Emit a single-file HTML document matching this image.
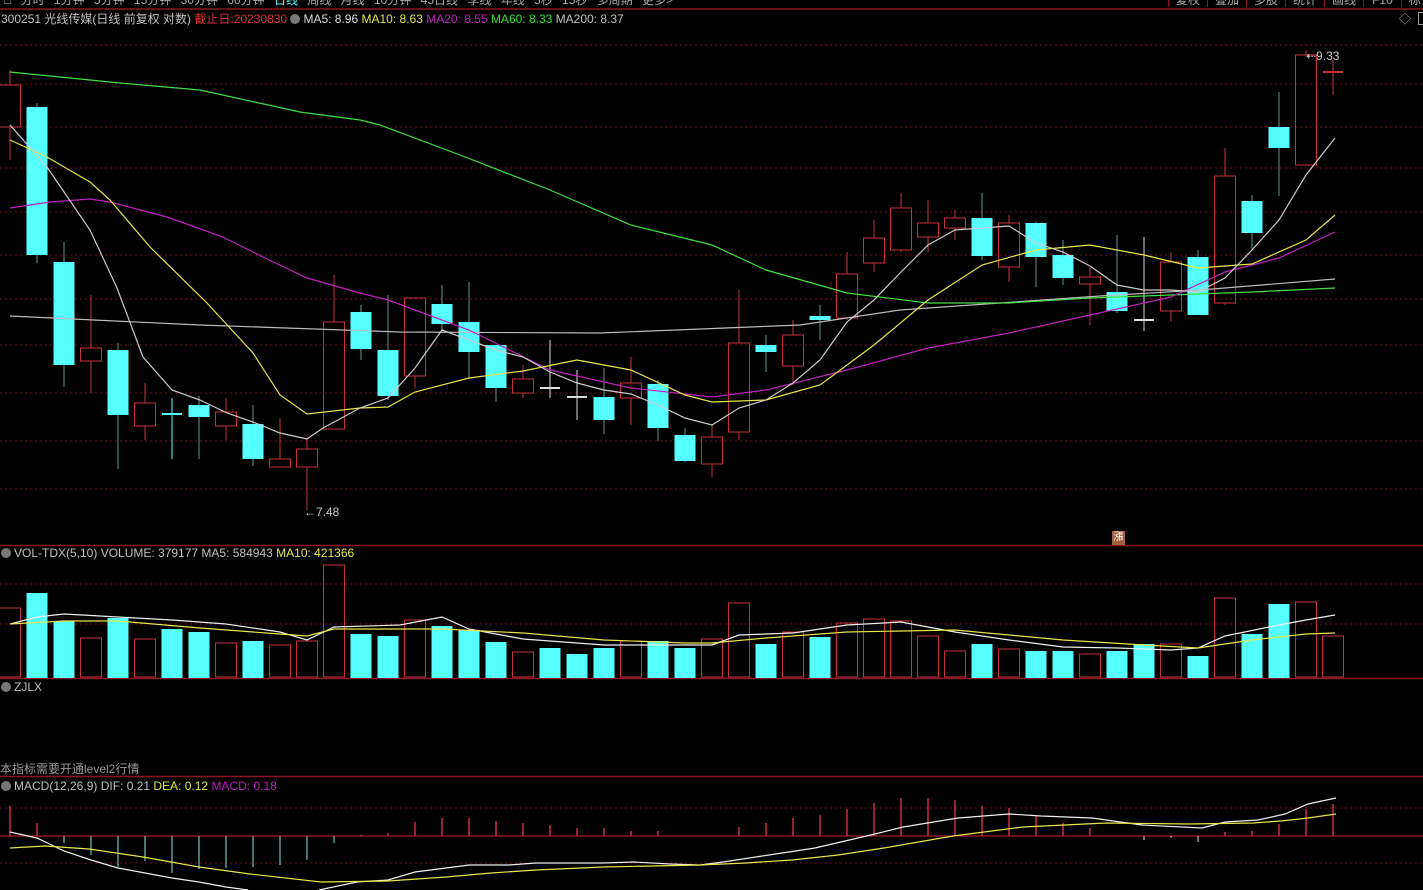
<!DOCTYPE html>
<html><head><meta charset="utf-8">
<style>
html,body{margin:0;padding:0;background:#000;width:1423px;height:890px;overflow:hidden}
body{font-family:"Liberation Sans","Noto Sans CJK SC",sans-serif;font-size:12px;color:#c0c0c0}
svg{position:absolute;left:0;top:0}
.t{position:absolute;white-space:nowrap;line-height:14px}
.ic{display:inline-block;width:10px;height:10px;border-radius:50%;background:#777;vertical-align:-1px;margin-right:3px}
</style></head><body>
<svg id="s" width="1423" height="890" xmlns="http://www.w3.org/2000/svg">
<g stroke="#6a0f18" stroke-dasharray="2,3" stroke-width="1">
<line x1="0" y1="45" x2="1423" y2="45"/><line x1="0" y1="84" x2="1423" y2="84"/><line x1="0" y1="127" x2="1423" y2="127"/><line x1="0" y1="168" x2="1423" y2="168"/><line x1="0" y1="212" x2="1423" y2="212"/><line x1="0" y1="255" x2="1423" y2="255"/><line x1="0" y1="299" x2="1423" y2="299"/><line x1="0" y1="345" x2="1423" y2="345"/><line x1="0" y1="393" x2="1423" y2="393"/><line x1="0" y1="441" x2="1423" y2="441"/><line x1="0" y1="489" x2="1423" y2="489"/>
<line x1="0" y1="584" x2="1423" y2="584"/><line x1="0" y1="624" x2="1423" y2="624"/>
<line x1="0" y1="808" x2="1423" y2="808"/><line x1="0" y1="863" x2="1423" y2="863"/>
</g>
<g stroke="#8a1420" stroke-width="1.5">
<line x1="0" y1="9" x2="1423" y2="9"/>
<line x1="0" y1="545.5" x2="1423" y2="545.5"/>
<line x1="0" y1="678.5" x2="1423" y2="678.5"/>
<line x1="0" y1="776.5" x2="1423" y2="776.5"/>
<line x1="0" y1="836" x2="1423" y2="836"/>
</g>
<g id="g"></g>
</svg>
<div class="t" style="left:4px;top:-7px;color:#aaa;word-spacing:6px">&#9633; 分时 1分钟 5分钟 15分钟 30分钟 60分钟 <span style="color:#5ff">日线</span> 周线 月线 10分钟 45日线 季线 年线 5秒 15秒 多周期 更多&gt;</div>
<div class="t" style="left:1168px;top:-7px;color:#aaa">
<span style="border-left:1px solid #8a1420;padding:0 7px">复权</span><span style="border-left:1px solid #8a1420;padding:0 7px">叠加</span><span style="border-left:1px solid #8a1420;padding:0 7px">多股</span><span style="border-left:1px solid #8a1420;padding:0 7px">统计</span><span style="border-left:1px solid #8a1420;padding:0 7px">画线</span><span style="border-left:1px solid #8a1420;padding:0 8px">F10</span><span style="border-left:1px solid #8a1420;padding:0 7px">标记</span><span style="border-left:1px solid #8a1420;padding:0 4px"></span></div>
<div class="t" style="left:1px;top:12px;font-size:12px">300251 光线传媒(日线 前复权 对数) <span style="color:#e0303a">截止日:20230830</span> <span class="ic"></span><span style="color:#ddd">MA5: 8.96</span> <span style="color:#e6e64a">MA10: 8.63</span> <span style="color:#c020c0">MA20: 8.55</span> <span style="color:#30e030">MA60: 8.33</span> <span style="color:#c0c0c0">MA200: 8.37</span></div>
<div class="t" style="left:1399px;top:12px;color:#aaa">◇</div>
<div class="t" style="left:1418px;top:12px;width:8px;height:11px;border:1px solid #999"></div>
<div class="t" style="left:304px;top:505px;color:#ccc">←7.48</div>
<div class="t" style="left:1306px;top:49px;color:#ccc">⇠9.33</div>
<div class="t" style="left:1112px;top:531px;width:13px;height:14px;background:#a06040;color:#fff;font-size:10px;text-align:center;line-height:14px">漲</div>
<div class="t" style="left:1px;top:546px"><span class="ic"></span>VOL-TDX(5,10) VOLUME: 379177 MA5: 584943 <span style="color:#e6e64a">MA10: 421366</span></div>
<div class="t" style="left:1px;top:680px"><span class="ic"></span>ZJLX</div>
<div class="t" style="left:0;top:762px;color:#999">本指标需要开通level2行情</div>
<div class="t" style="left:1px;top:779px"><span class="ic"></span>MACD(12,26,9) DIF: 0.21 <span style="color:#e6e64a">DEA: 0.12</span> <span style="color:#c020c0">MACD: 0.18</span></div>
<script>
var C=[['r',85,127,70,160],['c',107,255,103,263],['c',262,365,242,387],['r',348,361,295,393],['c',350,415,343,469],['r',403,426,383,440],['d',414,416,398,459,'#5ff'],['c',405,417,396,459],['r',412,426,398,440],['c',424,459,405,466],['r',459,467,418,467],['r',449,467,437,510],['r',322,429,275,429],['c',312,349,305,360],['c',350,396,295,400],['r',298,376,298,388],['c',304,324,285,330],['c',322,352,282,378],['c',345,388,345,402],['r',379,393,365,398],['d',388,388,340,398,'#ddd'],['d',397,397,370,420,'#ddd'],['c',397,420,368,434],['r',383,398,357,425],['c',384,428,380,441],['c',435,461,428,462],['r',437,464,425,477],['r',343,432,290,440],['c',345,352,335,372],['r',335,366,320,385],['c',316,320,305,340],['r',274,318,252,320],['r',238,263,220,272],['r',208,250,193,252],['r',223,237,200,252],['r',218,228,210,240],['c',218,256,193,260],['r',223,267,215,282],['c',223,257,222,287],['c',255,278,240,285],['r',277,284,267,325],['c',292,311,235,313],['d',320,320,237,331,'#ddd'],['r',262,311,252,322],['c',257,315,250,315],['r',176,303,148,305],['c',201,233,195,250],['c',127,148,92,196],['r',55,165,50,165],['d',72,72,60,95,'#c83040']];
var V=['r608','c593','c621','r638','c618','r639','c629','c632','r643','c641','r645','r641','r565','c634','c636','r620','c626','c630','c642','r652','c648','c654','c648','r641','c641','c648','r639','r603','c644','r632','c637','r623','r619','r621','r636','r651','c644','r649','c651','c651','r654','c651','c644','r644','c656','r598','c634','c604','r602','r636'];
var M=[806,823,843,855,867,861,873,869,868,867,865,860,843,835,833,822,818,818,821,823,825,828,828,831,831,836,836,827,823,818,815,809,803,798,798,800,806,808,815,823,828,836,840,838,842,832,831,824,809,804];
var R='#c83040',CY='#5ff',WK='#5f9a98',h='';
function X(i){return 10+i*27}
C.forEach(function(c,i){var x=X(i);
 if(c[0]=='d'){h+='<line x1="'+x+'" y1="'+c[3]+'" x2="'+x+'" y2="'+c[4]+'" stroke="'+c[5]+'"/><line x1="'+(x-10)+'" y1="'+c[1]+'" x2="'+(x+10)+'" y2="'+c[1]+'" stroke="'+c[5]+'" stroke-width="2"/>';return}
 if(c[0]=='r'){h+='<line x1="'+x+'" y1="'+c[3]+'" x2="'+x+'" y2="'+c[1]+'" stroke="'+R+'"/><line x1="'+x+'" y1="'+c[2]+'" x2="'+x+'" y2="'+c[4]+'" stroke="'+R+'"/><rect x="'+(x-10.5)+'" y="'+c[1]+'" width="21" height="'+Math.max(c[2]-c[1],1)+'" fill="none" stroke="'+R+'"/>'}
 else{h+='<line x1="'+x+'" y1="'+c[3]+'" x2="'+x+'" y2="'+c[4]+'" stroke="'+WK+'"/><rect x="'+(x-10.5)+'" y="'+c[1]+'" width="21" height="'+Math.max(c[2]-c[1],2)+'" fill="'+CY+'"/>'}
});
V.forEach(function(v,i){var x=X(i),t=+v.slice(1);
 if(v[0]=='r')h+='<rect x="'+(x-10.5)+'" y="'+t+'" width="21" height="'+(677-t)+'" fill="none" stroke="'+R+'"/>';
 else h+='<rect x="'+(x-10.5)+'" y="'+t+'" width="21" height="'+(678-t)+'" fill="'+CY+'"/>';
});
M.forEach(function(m,i){if(m==836)return;var x=X(i);var col=m<836?R:(i>40?'#999':WK);h+='<line x1="'+x+'" y1="836" x2="'+x+'" y2="'+m+'" stroke="'+col+'" stroke-width="1.5"/>'});
function P(pts,col,w){h+='<polyline fill="none" stroke="'+col+'" stroke-width="'+(w||1.2)+'" points="'+pts+'"/>'}
P('10,316 200,325 400,332 600,333 800,325 900,310 1000,303 1100,296 1200,290 1335,279','#bbb');
P('10,72 120,83 200,90 300,112 360,120 380,125 460,155 550,190 631,225 712,245 766,270 847,293 928,303 1009,303 1090,298 1171,295 1252,292 1335,288','#40e040');
P('10,208 50,202 90,199 110,202 167,217 223,237 263,257 307,278 360,293 388,300 469,330 550,370 631,388 712,397 766,390 847,370 928,348 1009,333 1090,315 1171,297 1225,272 1279,258 1335,232','#c020c0');
P('10,140 47,157 90,182 110,200 150,247 207,303 253,353 280,395 307,414 360,408 388,407 415,392 469,378 523,371 577,360 631,370 685,395 712,402 766,400 820,385 874,345 928,300 982,265 1036,250 1090,245 1144,255 1198,268 1252,264 1306,240 1335,215','#e6e64a');
P('10,125 47,167 90,230 117,288 143,357 172,390 200,400 227,413 253,422 280,433 307,439 323,428 360,408 388,398 415,368 442,330 469,340 496,350 523,357 550,372 577,383 604,390 631,394 658,405 685,418 712,425 739,408 766,400 793,383 820,360 847,322 874,300 901,272 928,245 955,230 982,228 1009,226 1036,243 1063,252 1090,266 1117,285 1144,290 1171,290 1198,292 1225,278 1252,250 1279,220 1306,175 1335,138','#ccc');
P('10,624 37,617 64,614 118,617 172,620 226,624 280,632 307,640 334,627 400,625 442,617 469,629 523,639 604,645 658,645 712,645 739,635 793,633 847,625 901,622 955,632 1009,640 1063,647 1117,648 1171,650 1198,648 1225,636 1279,625 1306,620 1335,615','#eee');
P('10,624 64,621 118,621 200,628 280,634 307,636 334,629 442,629 523,633 604,640 685,643 712,643 766,638 847,632 955,630 1063,640 1144,645 1198,648 1252,640 1306,634 1335,633','#e6e64a');
P('10,832 37,838 64,851 91,860 118,868 145,873 172,878 199,882 226,887 248,890','#eee');
P('319,890 357,882 388,880 415,872 446,868 469,865 509,865 536,863 603,863 634,862 670,864 700,865 723,862 769,855 815,848 875,834 903,827 958,818 1009,814 1041,816 1092,818 1142,825 1202,828 1225,822 1258,820 1285,814 1308,804 1336,798','#eee');
P('10,848 45,846 89,849 143,857 199,867 250,874 321,882 388,881 446,877 491,873 536,870 603,867 700,865 746,863 792,860 838,855 884,848 953,836 1023,827 1106,823 1188,824 1253,823 1281,821 1308,818 1336,814','#e6e64a');
document.getElementById('g').innerHTML=h;
</script>
</body></html>
